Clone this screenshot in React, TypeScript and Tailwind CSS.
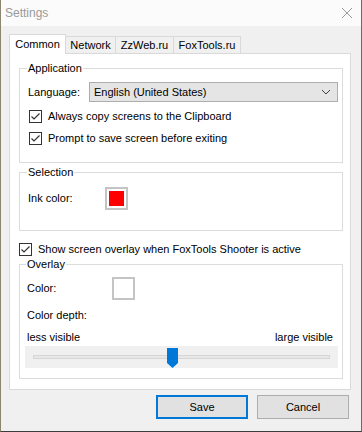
import React from "react";

function Check() {
  return (
    <span className="w-[13px] h-[13px] border border-[#333333] bg-white flex items-center justify-center shrink-0">
      <svg width="11" height="11" viewBox="0 0 11 11">
        <path d="M1.5 5.5 L4 8 L9.5 2.5" fill="none" stroke="#333333" strokeWidth="1.2" />
      </svg>
    </span>
  );
}

function Group({ title, children, className }: { title: string; children: React.ReactNode; className?: string }) {
  return (
    <fieldset className={"border border-[#dcdcdc] mx-0 " + (className ?? "")}>
      <legend className="-ml-[1px] px-[1px] leading-[15px]">{title}</legend>
      {children}
    </fieldset>
  );
}

export default function App() {
  return (
    <div
      className="w-[362px] h-[432px] bg-[#f0f0f0] border-l border-r border-b border-l-[#8c8670] border-r-[#6e6a5e] border-b-[#3c3c3c] text-[11px] text-black flex flex-col"
      style={{ fontFamily: '"Liberation Sans", Arial, sans-serif' }}
    >
      {/* Title bar */}
      <div className="h-[26px] bg-[#fbfbfb] flex items-center justify-between pl-[4px] pr-[8px] shrink-0">
        <span className="text-[#9a9a9a] text-[12px]">Settings</span>
        <svg width="12" height="12" viewBox="0 0 12 12">
          <path d="M1 1 L11 11 M11 1 L1 11" stroke="#9a9a9a" strokeWidth="1" />
        </svg>
      </div>

      {/* Tabs */}
      <div className="flex items-end h-[20px] mt-[8px] ml-[8px] -mb-px relative z-10">
        <div className="h-[20px] w-[57px] bg-white border-l border-t border-r border-[#d9d9d9] flex items-center justify-center pb-[1px]">
          Common
        </div>
        <div className="h-[18px] w-[51px] -ml-px border border-[#d9d9d9] flex items-center justify-center">Network</div>
        <div className="h-[18px] w-[59px] -ml-px border border-[#d9d9d9] flex items-center justify-center">ZzWeb.ru</div>
        <div className="h-[18px] w-[68px] -ml-px border border-[#d9d9d9] flex items-center justify-center">FoxTools.ru</div>
      </div>

      {/* Panel */}
      <div className="ml-[8px] w-[342px] h-[337px] bg-white border border-[#d9d9d9] pl-[9px] pr-[7px] pt-[7px] flex flex-col">
        <Group title="Application" className="h-[102px] pl-[8px] pr-[4px]">
          <div className="flex items-center mt-[6px] h-[20px]">
            <span className="w-[61px]">Language:</span>
            <div className="flex-1 h-[20px] bg-[#e5e5e5] border border-[#adadad] flex items-center justify-between pl-[4px] pr-[6px]">
              <span>English (United States)</span>
              <svg width="10" height="6" viewBox="0 0 10 6">
                <path d="M1 1 L5 5 L9 1" fill="none" stroke="#404040" strokeWidth="1" />
              </svg>
            </div>
          </div>
          <div className="flex items-center gap-[6px] mt-[8px] h-[13px] ml-[1px]">
            <Check />
            <span>Always copy screens to the Clipboard</span>
          </div>
          <div className="flex items-center gap-[6px] mt-[9px] h-[13px] ml-[1px]">
            <Check />
            <span>Prompt to save screen before exiting</span>
          </div>
        </Group>

        <Group title="Selection" className="h-[66px] mt-[2px] pl-[8px]">
          <div className="flex items-center mt-[6px] h-[24px]">
            <span className="w-[77px]">Ink color:</span>
            <div className="w-[23px] h-[23px] border-2 border-[#c4c4c4] p-[2px] bg-white">
              <div className="w-full h-full bg-[#ff0000]" />
            </div>
          </div>
        </Group>

        <div className="flex items-center gap-[6px] mt-[12px] h-[13px]">
          <Check />
          <span>Show screen overlay when FoxTools Shooter is active</span>
        </div>

        <Group title="Overlay" className="h-[122px] mt-[1px] pl-[7px] pr-[4px]">
          <div className="flex items-center mt-[5px] h-[23px]">
            <span className="w-[85px]">Color:</span>
            <div className="w-[23px] h-[23px] border-2 border-[#c4c4c4] bg-white" />
          </div>
          <div className="mt-[8px] h-[15px] leading-[15px]">Color depth:</div>
          <div className="flex justify-between mt-[7px] h-[15px] leading-[15px] pr-[5px]">
            <span>less visible</span>
            <span>large visible</span>
          </div>
          <div className="mt-[1px] h-[22px] bg-[#f0f0f0] -ml-[2px] flex items-center px-[8px] relative">
            <div className="flex-1 h-[4px] bg-[#e7e7e7] border border-[#d6d6d6]" />
            <svg className="absolute left-[142px] top-[2px]" width="12" height="20" viewBox="0 0 12 20">
              <path d="M0 0 H11 V15 L5.5 20 L0 15 Z" fill="#0078d7" />
            </svg>
          </div>
        </Group>
      </div>

      {/* Buttons */}
      <div className="flex justify-end gap-[9px] mt-[5px] pr-[12px]">
        <button className="w-[92px] h-[24px] bg-[#e1e1e1] border-2 border-[#0078d7] flex items-center justify-center">
          Save
        </button>
        <button className="w-[92px] h-[24px] bg-[#e1e1e1] border border-[#adadad] flex items-center justify-center">
          Cancel
        </button>
      </div>
    </div>
  );
}
